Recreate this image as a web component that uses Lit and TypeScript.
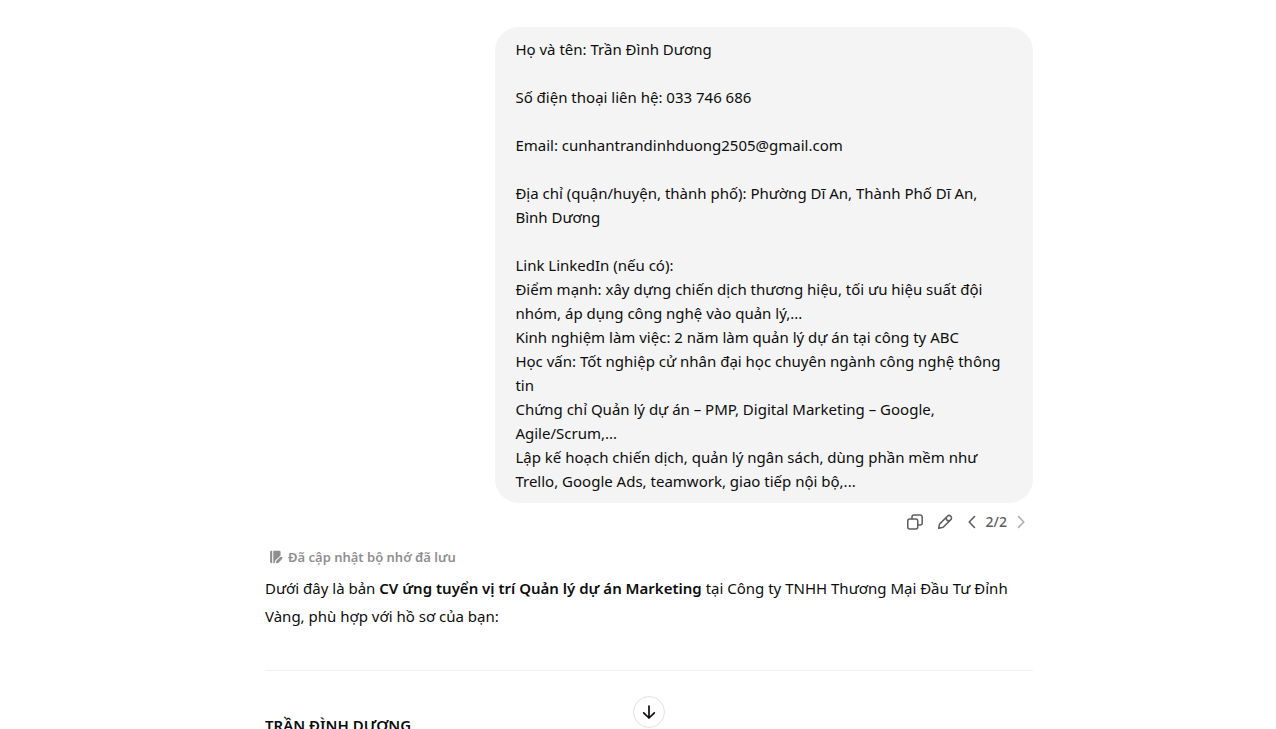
import { LitElement, html, css } from "lit";
import { customElement, state } from "lit/decorators.js";

const MESSAGE_LINES = [
  "Họ và tên: Trần Đình Dương",
  "",
  "Số điện thoại liên hệ: 033 746 686",
  "",
  "Email: cunhantrandinhduong2505@gmail.com",
  "",
  "Địa chỉ (quận/huyện, thành phố): Phường Dĩ An, Thành Phố Dĩ An, Bình Dương",
  "",
  "Link LinkedIn (nếu có):",
  "Điểm mạnh: xây dựng chiến dịch thương hiệu, tối ưu hiệu suất đội nhóm, áp dụng công nghệ vào quản lý,...",
  "Kinh nghiệm làm việc: 2 năm làm quản lý dự án tại công ty ABC",
  "Học vấn: Tốt nghiệp cử nhân đại học chuyên ngành công nghệ thông tin",
  "Chứng chỉ Quản lý dự án – PMP, Digital Marketing – Google, Agile/Scrum,...",
  "Lập kế hoạch chiến dịch, quản lý ngân sách, dùng phần mềm như Trello, Google Ads, teamwork, giao tiếp nội bộ,...",
];

@customElement("user-message")
export class UserMessage extends LitElement {
  static styles = css`
    :host {
      display: flex;
      flex-direction: column;
      align-items: flex-end;
    }
    .bubble {
      box-sizing: border-box;
      width: 70%;
      padding: 10px 20px;
      border-radius: 24px;
      background: #f4f4f4;
      white-space: pre-wrap;
      line-height: 24px;
    }
    .actions {
      display: flex;
      align-items: center;
      margin-top: 4px;
      height: 30px;
      color: #5d5d5d;
    }
    button {
      display: flex;
      align-items: center;
      justify-content: center;
      width: 30px;
      height: 30px;
      padding: 0;
      border: 0;
      border-radius: 8px;
      background: none;
      color: inherit;
      cursor: pointer;
    }
    button.step {
      width: 24px;
    }
    button:disabled {
      opacity: 0.5;
      cursor: default;
    }
    .count {
      padding: 0 2px;
      font-size: 14px;
      font-weight: 500;
      line-height: 20px;
    }
    svg {
      display: block;
      fill: none;
      stroke: currentColor;
      stroke-linecap: round;
      stroke-linejoin: round;
    }
  `;

  @state() private page = 2;

  render() {
    return html`
      <div class="bubble">${MESSAGE_LINES.join("\n")}</div>
      <div class="actions">
        <button aria-label="Sao chép">
          <svg width="18" height="18" viewBox="0 0 18 18" stroke-width="1.5">
            <rect x="1.75" y="6" width="10" height="10" rx="2" />
            <path d="M6 5.800V4a2 2 0 0 1 2-2h6.200a2 2 0 0 1 2 2v6a2 2 0 0 1-2 2h-2" />
          </svg>
        </button>
        <button aria-label="Chỉnh sửa">
          <svg width="18" height="18" viewBox="0 0 18 18" stroke-width="1.500">
            <path d="M2.700 15.300l.7-3.600a2 2 0 0 1 .6-1.100l7.400-7.400a2.400 2.400 0 0 1 3.400 3.400l-7.400 7.400a2 2 0 0 1-1.100.6z" />
            <path d="M10 4.800c.2 1.900 1.400 3.100 3.200 3.300" />
          </svg>
        </button>
        <button class="step" aria-label="Phản hồi trước" ?disabled=${this.page === 1} @click=${() => this.page--}>
          <svg width="18" height="18" viewBox="0 0 18 18" stroke-width="1.600"><path d="M11.500 3.500L6.200 9l5.300 5.500" /></svg>
        </button>
        <span class="count">${this.page}/2</span>
        <button class="step" aria-label="Phản hồi tiếp theo" ?disabled=${this.page === 2} @click=${() => this.page++}>
          <svg width="18" height="18" viewBox="0 0 18 18" stroke-width="1.600"><path d="M6.500 3.500L11.800 9l-5.300 5.500" /></svg>
        </button>
      </div>
    `;
  }
}

@customElement("assistant-message")
export class AssistantMessage extends LitElement {
  static styles = css`
    :host {
      display: block;
    }
    .memory {
      display: flex;
      align-items: center;
      gap: 4px;
      padding: 0 4px;
      border: 0;
      background: none;
      color: #8f8f8f;
      font: inherit;
      font-size: 13px;
      font-weight: 600;
      line-height: 20px;
      cursor: pointer;
    }
    .memory svg {
      display: block;
    }
    p {
      margin: 7px 0 0;
      line-height: 28px;
    }
    strong {
      font-weight: 600;
    }
    hr {
      margin: 40px 0;
      border: 0;
      border-top: 1px solid #f0f0f0;
    }
    h2 {
      margin: 0;
      font-size: 15px;
      font-weight: 600;
      line-height: 28px;
    }
  `;

  render() {
    return html`
      <button class="memory">
        <svg width="15" height="16" viewBox="0 0 15 16" fill="currentColor">
          <path d="M2.500 1.800h.7v12.400h-.7A1.400 1.400 0 0 1 1.100 12.800V3.200a1.400 1.400 0 0 1 1.400-1.400z" />
          <path d="M4.300 1.800h5.900a1.400 1.400 0 0 1 1.400 1.400v3.300L6.300 11.600l-.7 2.600H4.300z" />
          <path d="M6.800 14.300l.5-2.300 3.900-3.900a1.300 1.300 0 0 1 1.900 1.900l-3.900 3.900z" />
        </svg>
        <span>Đã cập nhật bộ nhớ đã lưu</span>
      </button>
      <p>
        Dưới đây là bản <strong>CV ứng tuyển vị trí Quản lý dự án Marketing</strong> tại Công ty TNHH
        Thương Mại Đầu Tư Đỉnh Vàng, phù hợp với hồ sơ của bạn:
      </p>
      <hr />
      <h2>TRẦN ĐÌNH DƯƠNG</h2>
    `;
  }
}

@customElement("app-root")
export class AppRoot extends LitElement {
  static styles = css`
    :host {
      display: block;
      position: relative;
      box-sizing: border-box;
      height: 100vh;
      overflow: hidden;
      padding: 27px 0 0 22px;
      background: #fff;
      color: #0d0d0d;
      font-family: "Noto Sans", "Open Sans", sans-serif;
      font-size: 15px;
    }
    .thread {
      display: flex;
      flex-direction: column;
      gap: 10px;
      max-width: 768px;
      margin: 0 auto;
    }
    .overlay {
      position: absolute;
      left: 22px;
      right: 0;
      bottom: 1px;
      display: flex;
      justify-content: center;
      pointer-events: none;
    }
    .scroll {
      display: flex;
      align-items: center;
      justify-content: center;
      width: 32px;
      height: 32px;
      padding: 0;
      border: 1px solid #e2e2e2;
      border-radius: 50%;
      background: #fff;
      color: #0d0d0d;
      cursor: pointer;
      pointer-events: auto;
    }
  `;

  render() {
    return html`
      <main class="thread">
        <user-message></user-message>
        <assistant-message></assistant-message>
      </main>
      <div class="overlay">
        <button class="scroll" aria-label="Cuộn xuống cuối">
          <svg width="20" height="20" viewBox="0 0 20 20" fill="none" stroke="currentColor" stroke-width="1.700" stroke-linecap="round" stroke-linejoin="round">
            <path d="M10 4v12M4.700 10.800L10 16l5.300-5.200" />
          </svg>
        </button>
      </div>
    `;
  }
}
